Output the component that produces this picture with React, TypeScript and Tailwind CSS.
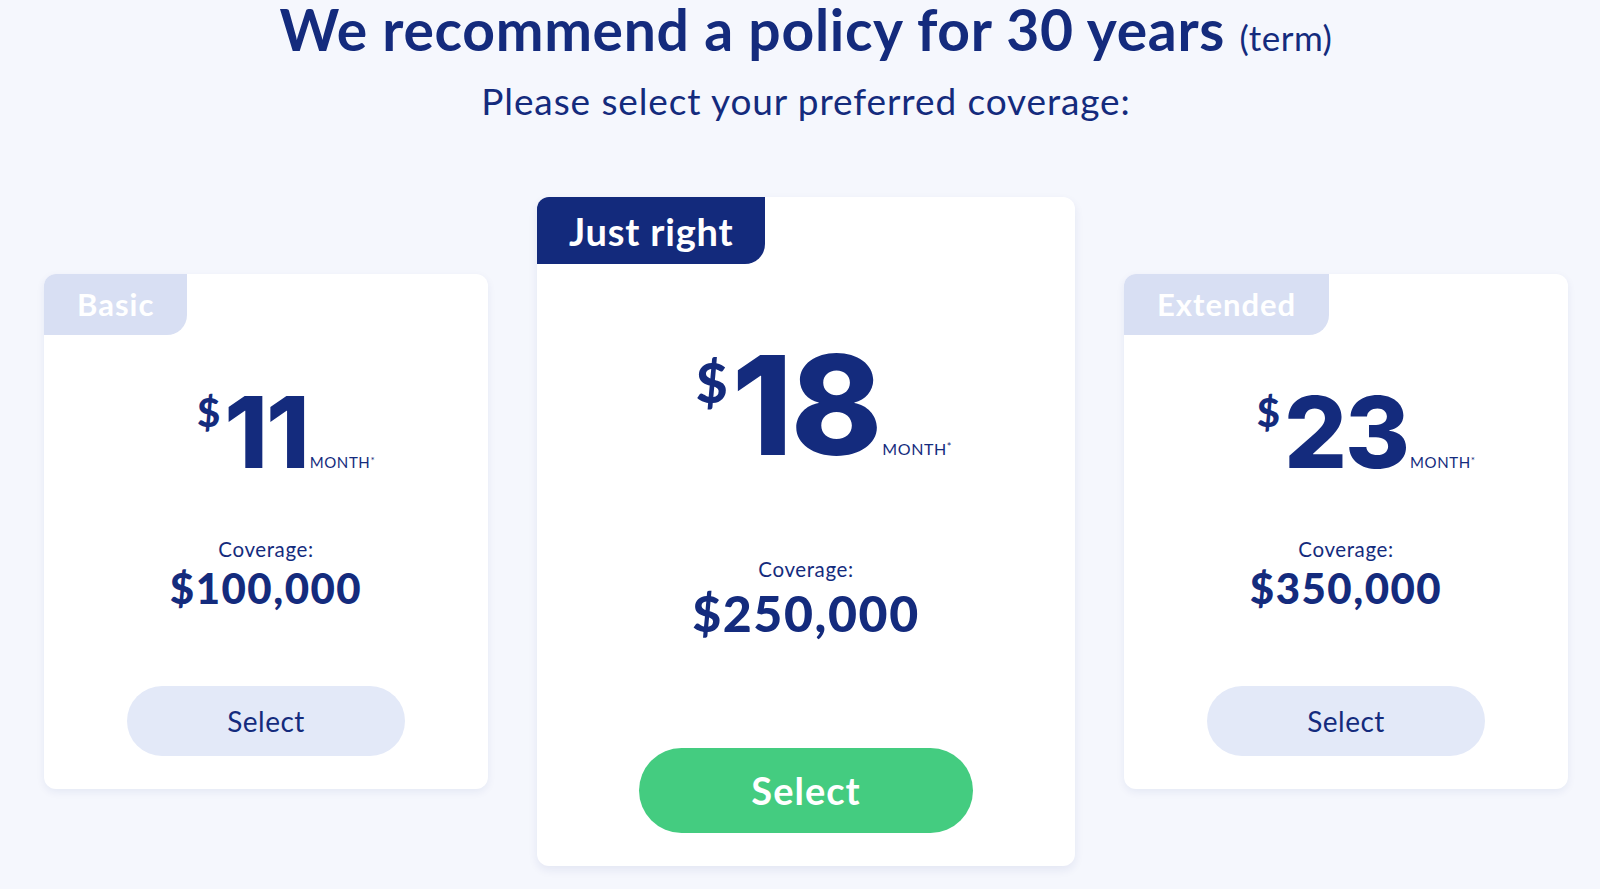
import React from "react";

type Plan = {
  tag: string;
  price: string;
  coverage: string;
};

const plans: Plan[] = [
  { tag: "Basic", price: "11", coverage: "$100,000" },
  { tag: "Just right", price: "18", coverage: "$250,000" },
  { tag: "Extended", price: "23", coverage: "$350,000" },
];

const numFont = { fontFamily: "Inter, 'Noto Sans', sans-serif" };
const textFont = { fontFamily: "Lato, 'Noto Sans', sans-serif" };

function SideCard({ plan }: { plan: Plan }) {
  return (
    <div className="w-[444px] h-[515px] bg-white rounded-[12px] shadow-[0_3px_8px_rgba(20,43,125,0.07)] flex flex-col items-center shrink-0">
      <div className="self-start h-[61px] px-[33px] bg-[#d8dff3] rounded-tl-[12px] rounded-br-[20px] flex items-center text-white font-bold text-[31px] tracking-[1px] leading-none">
        {plan.tag}
      </div>
      <div className="mt-[47.5px] flex justify-center">
        <div className="relative text-[99px] leading-none font-extrabold tracking-[-2px] text-[#142b7d]" style={numFont}>
          <span className="absolute right-full mr-[4px] top-[9.5px] text-[40px] leading-none font-black tracking-normal" style={textFont}>
            $
          </span>
          {plan.price}
          <span
            className="absolute left-full ml-[2px] bottom-[11.8px] text-[15px] leading-none font-normal tracking-[0.6px] whitespace-nowrap"
            style={textFont}
          >
            MONTH<span className="text-[10px] align-top">*</span>
          </span>
        </div>
      </div>
      <div className="mt-[57.5px] text-[20.5px] leading-none font-normal tracking-[0.6px] text-[#142b7d]">Coverage:</div>
      <div className="mt-[7px] text-[42px] leading-none font-black text-[#142b7d] tracking-[1.5px]">{plan.coverage}</div>
      <button className="mt-[77px] w-[278px] h-[70px] rounded-full bg-[#e3e9f8] text-[#142b7d] text-[28px] tracking-[0.5px] font-normal leading-none">
        Select
      </button>
    </div>
  );
}

function FeaturedCard({ plan }: { plan: Plan }) {
  return (
    <div className="w-[538px] h-[669px] bg-white rounded-[12px] shadow-[0_4px_10px_rgba(20,43,125,0.08)] flex flex-col items-center shrink-0">
      <div className="self-start h-[67px] px-[32px] bg-[#132a7c] rounded-tl-[12px] rounded-br-[20px] flex items-center text-white font-bold text-[38px] tracking-[0.8px] leading-none">
        {plan.tag}
      </div>
      <div className="mt-[72px] flex justify-center">
        <div className="relative text-[138px] leading-none font-extrabold tracking-[-2px] text-[#142b7d]" style={numFont}>
          <span className="absolute right-full mr-[4px] top-[19.3px] text-[55px] leading-none font-black tracking-normal" style={textFont}>
            $
          </span>
          {plan.price}
          <span
            className="absolute left-full ml-[2px] bottom-[17px] text-[16px] leading-none font-normal tracking-[0.6px] whitespace-nowrap"
            style={textFont}
          >
            MONTH<span className="text-[11px] align-top">*</span>
          </span>
        </div>
      </div>
      <div className="mt-[85.3px] text-[20.5px] leading-none font-normal tracking-[0.6px] text-[#142b7d]">Coverage:</div>
      <div className="mt-[8px] text-[50px] leading-none font-black text-[#142b7d] tracking-[1.6px]">{plan.coverage}</div>
      <button className="mt-[110px] w-[334px] h-[85px] rounded-full bg-[#44cc80] text-white text-[38px] tracking-[1px] font-bold leading-none">
        Select
      </button>
    </div>
  );
}

export default function App() {
  return (
    <div className="w-full min-h-[889px] bg-[#f5f7fd] pl-[44px] pr-[32px] pt-[1px] text-[#142b7d]" style={textFont}>
      <h1 className="text-center text-[57px] leading-none font-bold tracking-[0.7px]">
        We recommend a policy for 30 years <span className="text-[35px] font-normal tracking-[0.5px]">(term)</span>
      </h1>
      <p className="mt-[24px] text-center text-[37px] leading-none font-normal tracking-[0.9px]">
        Please select your preferred coverage:
      </p>
      <div className="mt-[78px] flex items-center justify-between">
        <SideCard plan={plans[0]} />
        <FeaturedCard plan={plans[1]} />
        <SideCard plan={plans[2]} />
      </div>
    </div>
  );
}
